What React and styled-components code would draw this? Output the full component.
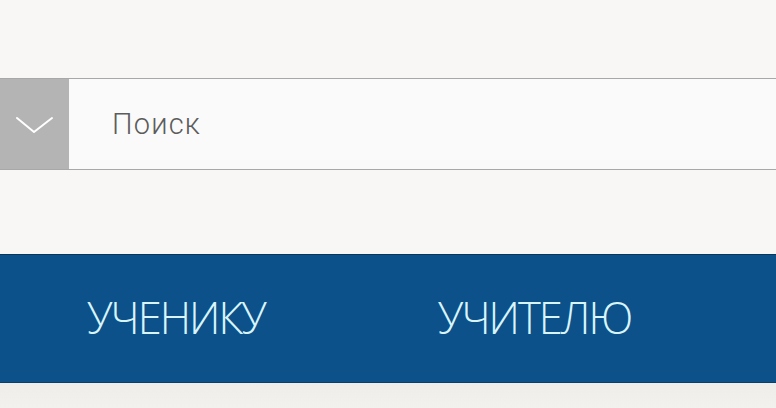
import React from "react";
import styled, { createGlobalStyle } from "styled-components";

const Global = createGlobalStyle`
  html, body { margin: 0; padding: 0; }
  body { background: #f8f7f6; width: 776px; height: 408px; overflow: hidden; }
`;

const Page = styled.div`
  width: 776px;
  height: 408px;
  display: flex;
  flex-direction: column;
  background: #f8f7f6;
`;

const Spacer = styled.div`
  height: ${(p) => p.h}px;
  flex: none;
`;

const SearchBar = styled.div`
  display: flex;
  height: 92px;
  border-top: 1.5px solid #a8a8a8;
  border-bottom: 1.5px solid #a8a8a8;
  background: #fafafa;
  box-sizing: border-box;
  flex: none;
`;

const Toggle = styled.button`
  width: 69px;
  border: 0;
  padding: 0;
  background: #b4b4b4;
  display: flex;
  align-items: center;
  justify-content: center;
  flex: none;
`;

const Input = styled.input`
  flex: 1;
  border: 0;
  outline: none;
  background: transparent;
  padding: 0 0 0 43px;
  font-family: "Roboto", "Liberation Sans", sans-serif;
  font-weight: 300;
  font-size: 29px;
  letter-spacing: 1.2px;
  color: #555;
  &::placeholder { color: #5c5c5c; }
`;

const NavBar = styled.nav`
  height: 129px;
  flex: none;
  background: #0c5189;
  border-top: 1px solid #07375f;
  border-bottom: 1px solid #083f6d;
  box-sizing: border-box;
  display: flex;
  align-items: center;
  padding-left: 87px;
  gap: 173px;
`;

const NavLink = styled.a`
  font-family: "Open Sans", "DejaVu Sans Condensed", sans-serif;
  font-weight: 300;
  font-size: 43.5px;
  letter-spacing: -2px;
  color: #d9f5fc;
  text-decoration: none;
  line-height: 1;
  margin-top: -2px;
`;

const Footer = styled.div`
  flex: 1;
  background: linear-gradient(#eeede9, #f3f1ee);
`;

export default function App() {
  return (
    <>
      <Global />
      <Page>
        <Spacer h={78} />
        <SearchBar>
          <Toggle aria-label="menu">
            <svg width="40" height="24" viewBox="0 0 40 24">
              <polyline points="2,6 19,20 37,6" fill="none" stroke="#fff" strokeWidth="2" strokeLinejoin="round" strokeLinecap="round" />
            </svg>
          </Toggle>
          <Input placeholder="Поиск" />
        </SearchBar>
        <Spacer h={84} />
        <NavBar>
          <NavLink href="#">УЧЕНИКУ</NavLink>
          <NavLink href="#">УЧИТЕЛЮ</NavLink>
        </NavBar>
        <Footer />
      </Page>
    </>
  );
}
